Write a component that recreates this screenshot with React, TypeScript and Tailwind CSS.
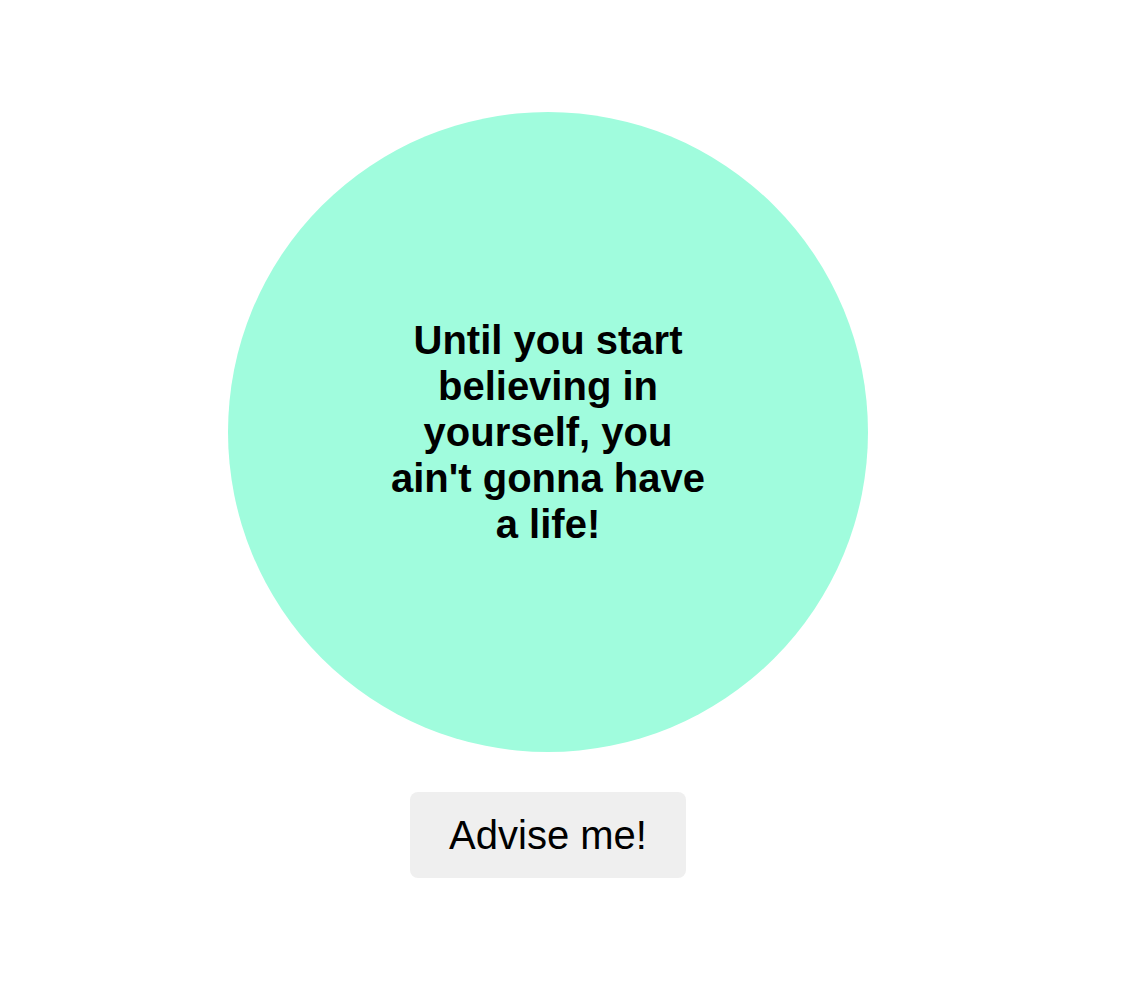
import React from "react";

export default function App() {
  return (
    <div className="min-h-screen bg-white" style={{ fontFamily: '"Liberation Sans", Arial, sans-serif' }}>
      <div className="w-[1096px] pt-[112px] flex flex-col items-center">
        <div className="w-[640px] h-[640px] rounded-full bg-[#a0fcdd] flex items-center justify-center">
          <p className="w-[320px] text-center text-[40px] font-bold leading-[46px] text-black">
            Until you start believing in yourself, you ain't gonna have a life!
          </p>
        </div>
        <button className="mt-[40px] w-[276px] h-[86px] rounded-[8px] bg-[#efefef] text-[40px] leading-[46px] text-black">
          Advise me!
        </button>
      </div>
    </div>
  );
}
